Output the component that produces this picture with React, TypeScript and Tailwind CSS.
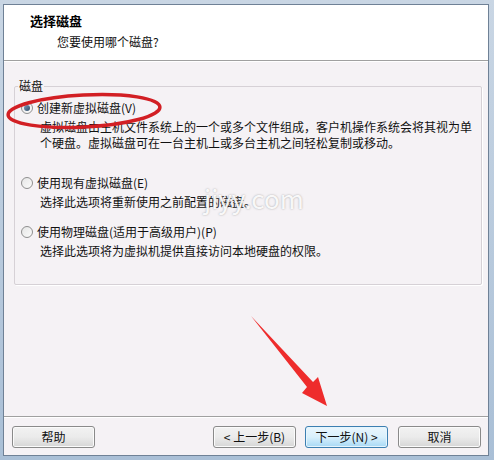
import React from "react";

const FONT = {
  fontFamily: '"Noto Sans CJK SC", "Noto Sans", "Liberation Sans", sans-serif',
};

const Radio = ({ checked }: { checked?: boolean }) => (
  <span className="relative inline-flex h-[12px] w-[12px] shrink-0 items-center justify-center rounded-full border border-[#8f8f8f] bg-gradient-to-br from-[#e6e6e6] to-[#fbfbfb]">
    {checked && (
      <span className="h-[6px] w-[6px] rounded-full bg-gradient-to-br from-[#7fa0c0] to-[#2f4a66]" />
    )}
  </span>
);

const Option = ({
  label,
  checked,
  desc,
  className,
}: {
  label: string;
  checked?: boolean;
  desc: string[];
  className?: string;
}) => (
  <div className={className}>
    <div className="flex h-[16px] items-center gap-[4px] pl-[6px]">
      <Radio checked={checked} />
      <span className="text-[12px] leading-[16px] text-[#111]">{label}</span>
    </div>
    <div className="mt-[3px] pl-[25px] text-[12px] leading-[16px] text-[#111]">
      {desc.map((d) => (
        <div key={d}>{d}</div>
      ))}
    </div>
  </div>
);

const Btn = ({
  children,
  primary,
  className,
}: {
  children: React.ReactNode;
  primary?: boolean;
  className?: string;
}) => (
  <button
    type="button"
    className={`flex h-[22px] w-[83px] items-center justify-center rounded-[3px] border text-[12px] text-[#111] ${
      primary
        ? "border-[#3c7fb1] bg-gradient-to-b from-[#eaf6fd] via-[#d9f0fc] to-[#a7d9f5] shadow-[inset_0_0_0_1px_#e6f5fd]"
        : "border-[#8a8a8a] bg-gradient-to-b from-[#f2f2f2] via-[#ebebeb] to-[#d6d6d6] shadow-[inset_0_0_0_1px_#fbfbfb]"
    } ${className ?? ""}`}
  >
    {children}
  </button>
);

export default function App() {
  return (
    <div
      style={FONT}
      className="relative h-[460px] w-[494px] overflow-hidden bg-gradient-to-b from-[#c9d6e4] to-[#a9bfd6] pb-[4px] pl-[3px] pr-[5px] pt-[4px]"
    >
      <div className="flex h-full flex-col border border-[#6f8196] bg-[#f5f2f5]">
        {/* header */}
        <div className="h-[56px] shrink-0 border-b border-[#a0a0a0] bg-white pl-[26px] pt-[7px]">
          <div className="text-[13px] font-bold leading-[18px] text-black">选择磁盘</div>
          <div className="mt-[4px] pl-[27px] text-[12px] leading-[16px] text-[#111]">
            您要使用哪个磁盘?
          </div>
        </div>

        {/* body */}
        <div className="h-[355px] shrink-0 border-t border-white pl-[10px] pr-[6px] pt-[24px]">
          <div className="relative h-[199px] rounded-[2px] border border-[#d6d1d6] shadow-[1px_1px_0_#ffffff]">
            <span className="absolute -top-[9px] left-[3px] bg-[#f5f2f5] px-[1px] text-[12px] leading-[16px] text-[#111]">
              磁盘
            </span>
            <Option
              className="pt-[13px]"
              checked
              label="创建新虚拟磁盘(V)"
              desc={[
                "虚拟磁盘由主机文件系统上的一个或多个文件组成，客户机操作系统会将其视为单",
                "个硬盘。虚拟磁盘可在一台主机上或多台主机之间轻松复制或移动。",
              ]}
            />
            <Option
              className="mt-[24px]"
              label="使用现有虚拟磁盘(E)"
              desc={["选择此选项将重新使用之前配置的磁盘。"]}
            />
            <Option
              className="mt-[14px]"
              label="使用物理磁盘(适用于高级用户)(P)"
              desc={["选择此选项将为虚拟机提供直接访问本地硬盘的权限。"]}
            />
          </div>
        </div>

        {/* footer */}
        <div className="flex flex-1 items-start border-t border-[#a0a0a0] pl-[8px] pr-[7px] pt-[9px] shadow-[inset_0_1px_0_#ffffff]">
          <Btn>帮助</Btn>
          <div className="flex-1" />
          <Btn>&lt; 上一步(B)</Btn>
          <Btn primary className="ml-[9px]">
            下一步(N) &gt;
          </Btn>
          <Btn className="ml-[10px]">取消</Btn>
        </div>
      </div>

      {/* watermark */}
      <div className="pointer-events-none absolute left-[204px] top-[183px] text-[26px] leading-[30px] text-white/90 [text-shadow:0_0_2px_rgba(110,110,110,0.6)]">
        jiyy.com
      </div>

      {/* annotations */}
      <svg
        className="pointer-events-none absolute left-0 top-0"
        width="494"
        height="460"
        viewBox="0 0 494 460"
      >
        <ellipse
          cx="84"
          cy="111"
          rx="76"
          ry="16"
          fill="none"
          stroke="#d21f24"
          strokeWidth="3.5"
          transform="rotate(-3 84 111)"
        />
        <polygon
          points="251,316 313,382 318,377 327,406 302,393 307,387"
          fill="#ee2c2c"
        />
      </svg>
    </div>
  );
}
